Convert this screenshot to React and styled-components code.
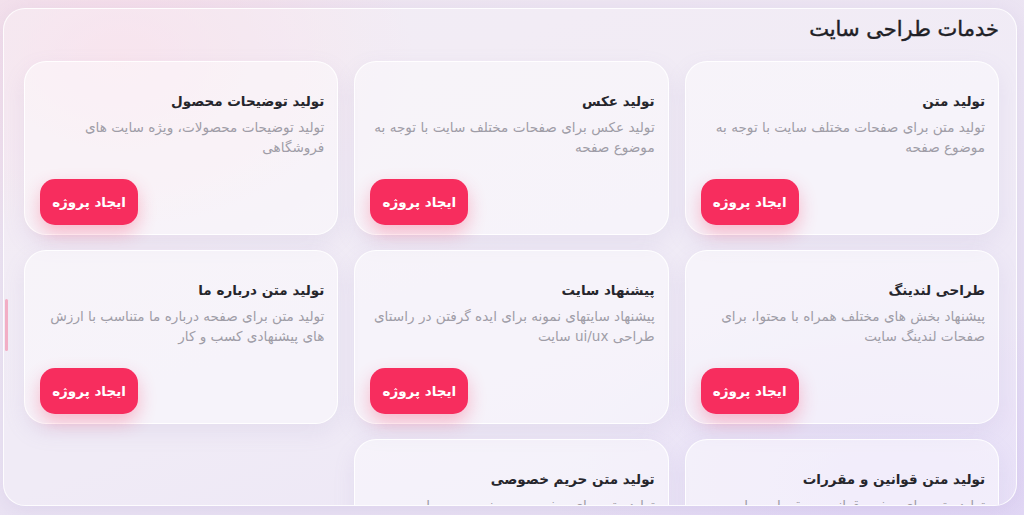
import styled, { createGlobalStyle } from "styled-components";

const GlobalStyle = createGlobalStyle`
  html, body {
    margin: 0;
    padding: 0;
  }
  body {
    font-family: "DejaVu Sans", "Noto Sans", sans-serif;
    background:
      radial-gradient(ellipse 420px 300px at 120px 60px, rgba(248, 214, 228, 0.7), transparent 70%),
      radial-gradient(ellipse 500px 260px at 900px 480px, rgba(222, 210, 246, 0.8), transparent 70%),
      linear-gradient(160deg, #efe6f0 0%, #ebe4f3 50%, #e4dcf3 100%);
    overflow: hidden;
  }
`;

const Page = styled.div`
  height: 515px;
  box-sizing: border-box;
  padding: 8px 7px 9px 3px;
`;

const Panel = styled.section`
  position: relative;
  height: 100%;
  box-sizing: border-box;
  direction: rtl;
  padding: 4px 17px 0 20px;
  border: 1px solid rgba(255, 255, 255, 0.85);
  border-radius: 22px;
  background: rgba(255, 255, 255, 0.28);
  box-shadow: 0 4px 18px rgba(160, 140, 200, 0.15);
  overflow: hidden;
`;

const Heading = styled.h2`
  margin: 0 0 16px;
  font-size: 21px;
  line-height: 32px;
  font-weight: 400;
  -webkit-text-stroke: 0.45px #1f1f26;
  color: #1f1f26;
`;

const Grid = styled.div`
  display: grid;
  grid-template-columns: repeat(3, 1fr);
  grid-auto-rows: 174px;
  gap: 15px 16px;
`;

const Card = styled.article`
  display: flex;
  flex-direction: column;
  box-sizing: border-box;
  padding: 29px 13px 9px 15px;
  border: 1px solid rgba(255, 255, 255, 0.9);
  border-radius: 22px;
  background: rgba(255, 255, 255, 0.42);
  box-shadow: 0 8px 22px rgba(150, 130, 190, 0.12);
`;

const CardTitle = styled.h3`
  margin: 0 0 6px;
  font-size: 13.5px;
  line-height: 20px;
  font-weight: 700;
  color: #26262c;
`;

const CardText = styled.p`
  margin: 0;
  font-size: 13.6px;
  line-height: 20px;
  color: #9f9da7;
`;

const Button = styled.button`
  margin-top: auto;
  align-self: flex-end;
  width: 98px;
  height: 46px;
  border: none;
  border-radius: 15px;
  background: #f72d5e;
  color: #fff;
  font-family: inherit;
  font-size: 13.5px;
  font-weight: 700;
  box-shadow: 0 8px 18px rgba(247, 45, 94, 0.3);
  cursor: pointer;
`;

const ScrollThumb = styled.div`
  position: absolute;
  left: 1px;
  top: 290px;
  width: 3px;
  height: 52px;
  border-radius: 2px;
  background: rgba(245, 100, 140, 0.45);
`;

const services = [
  { title: "تولید متن", text: "تولید متن برای صفحات مختلف سایت با توجه به موضوع صفحه" },
  { title: "تولید عکس", text: "تولید عکس برای صفحات مختلف سایت با توجه به موضوع صفحه" },
  { title: "تولید توضیحات محصول", text: "تولید توضیحات محصولات، ویژه سایت های فروشگاهی" },
  { title: "طراحی لندینگ", text: "پیشنهاد بخش های مختلف همراه با محتوا، برای صفحات لندینگ سایت" },
  { title: "پیشنهاد سایت", text: "پیشنهاد سایتهای نمونه برای ایده گرفتن در راستای طراحی ui/ux سایت" },
  { title: "تولید متن درباره ما", text: "تولید متن برای صفحه درباره ما متناسب با ارزش های پیشنهادی کسب و کار" },
  { title: "تولید متن قوانین و مقررات", text: "تولید متن برای صفحه قوانین و مقررات سایت" },
  { title: "تولید متن حریم خصوصی", text: "تولید متن برای صفحه حریم خصوصی سایت" },
];

const App = () => {
  return (
    <>
      <GlobalStyle />
      <Page>
        <Panel>
          <ScrollThumb />
          <Heading>خدمات طراحی سایت</Heading>
          <Grid>
            {services.map((s) => (
              <Card key={s.title}>
                <CardTitle>{s.title}</CardTitle>
                <CardText>{s.text}</CardText>
                <Button>ایجاد پروژه</Button>
              </Card>
            ))}
          </Grid>
        </Panel>
      </Page>
    </>
  );
};

export default App;
